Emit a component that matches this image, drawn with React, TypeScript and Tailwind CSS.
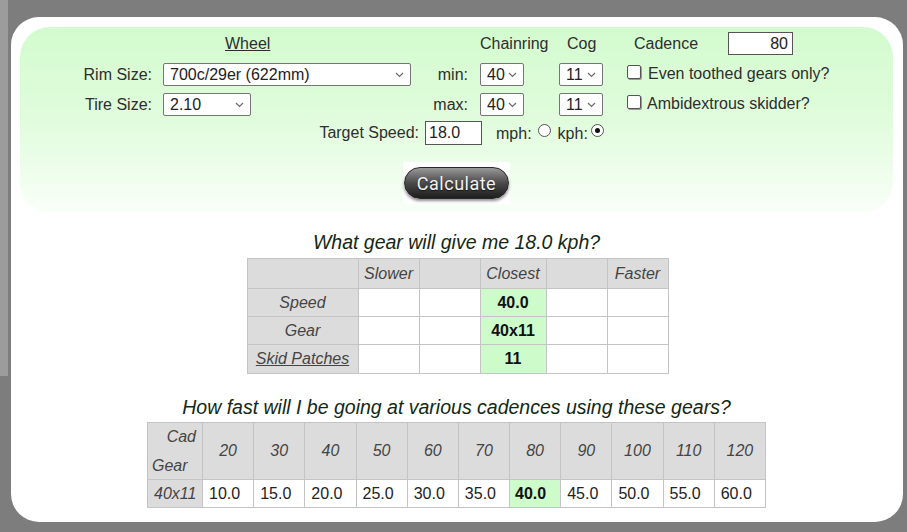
import React from "react";

const F = { fontFamily: '"Liberation Sans", Arial, sans-serif' };

function Chevron() {
  return (
    <svg width="9" height="6" viewBox="0 0 9 6" className="shrink-0">
      <path d="M1 1 L4.5 4.5 L8 1" fill="none" stroke="#6b6b6b" strokeWidth="1.2" />
    </svg>
  );
}

function FakeSelect({ value, w }: { value: string; w: string }) {
  return (
    <div
      className={`${w} h-[23px] bg-white border border-[#767676] rounded-[2px] flex items-center justify-between pl-[6px] pr-[6px] text-[16px] text-[#222] leading-none`}
    >
      <span>{value}</span>
      <Chevron />
    </div>
  );
}

function Checkbox() {
  return (
    <div className="w-[14px] h-[14px] bg-white border-[1.5px] border-[#555] rounded-[2px] shadow-[1px_1px_0_#9a9a9a] shrink-0" />
  );
}

function Radio({ checked }: { checked?: boolean }) {
  return (
    <div className="w-[13px] h-[13px] rounded-full bg-white border border-[#555] flex items-center justify-center shrink-0">
      {checked && <div className="w-[5px] h-[5px] rounded-full bg-[#111]" />}
    </div>
  );
}

export default function App() {
  const cads = ["20", "30", "40", "50", "60", "70", "80", "90", "100", "110", "120"];
  const vals = ["10.0", "15.0", "20.0", "25.0", "30.0", "35.0", "40.0", "45.0", "50.0", "55.0", "60.0"];
  const hd = "border border-[#c4c4c4] bg-[#dcdcdc] italic text-[#444] text-[16px] font-normal";
  const cell = "border border-[#c4c4c4] bg-white";
  const green = "border border-[#c4c4c4] bg-[#cdfbc9] font-bold text-[#111] text-[16px] text-center";
  return (
    <div className="relative w-[907px] h-[532px] bg-[#7d7d7d] overflow-hidden pt-[17px] pl-[11px]" style={F}>
      <div className="absolute left-0 top-0 w-[8px] h-[376px] bg-[#9c9c9c]" />
      <div className="relative w-[892px] h-[505px] bg-white rounded-[28px] pt-[10px] pl-[9px]">
        {/* green form panel */}
        <div className="w-[873px] h-[185px] rounded-[30px] bg-gradient-to-b from-[#d3fbcf] via-[#e0fcdc] to-[#f9fff8] text-[#2e2e2e] text-[16px] pt-[5px]">
          {/* row 1 */}
          <div className="flex items-center h-[23px]">
            <div className="w-[205px]" />
            <div className="w-[255px] underline">Wheel</div>
            <div className="w-[87px]">Chainring</div>
            <div className="w-[67px]">Cog</div>
            <div className="w-[94px]">Cadence</div>
            <div className="w-[65px] h-[23px] bg-white border border-[#555] flex items-center justify-end pr-[4px] text-[#222]">80</div>
          </div>
          {/* row 2 */}
          <div className="flex items-center h-[23px] mt-[8px]">
            <div className="w-[132px] text-right">Rim Size:</div>
            <div className="ml-[11px]"><FakeSelect value="700c/29er (622mm)" w="w-[248px]" /></div>
            <div className="w-[57px] text-right">min:</div>
            <div className="ml-[12px]"><FakeSelect value="40" w="w-[44px]" /></div>
            <div className="ml-[35px]"><FakeSelect value="11" w="w-[44px]" /></div>
            <div className="ml-[24px] -mt-[6px]"><Checkbox /></div>
            <div className="ml-[7px] -mt-[2px]">Even toothed gears only?</div>
          </div>
          {/* row 3 */}
          <div className="flex items-center h-[23px] mt-[7px]">
            <div className="w-[132px] text-right">Tire Size:</div>
            <div className="ml-[11px]"><FakeSelect value="2.10" w="w-[88px]" /></div>
            <div className="w-[160px]" />
            <div className="w-[57px] text-right">max:</div>
            <div className="ml-[12px]"><FakeSelect value="40" w="w-[44px]" /></div>
            <div className="ml-[35px]"><FakeSelect value="11" w="w-[44px]" /></div>
            <div className="ml-[24px] -mt-[6px]"><Checkbox /></div>
            <div className="ml-[6px] -mt-[2px]">Ambidextrous skidder?</div>
          </div>
          {/* row 4 */}
          <div className="flex items-center h-[24px] mt-[5px]">
            <div className="w-[399px] text-right">Target Speed:</div>
            <div className="ml-[6px] w-[57px] h-[24px] bg-white border border-[#555] flex items-center pl-[3px] text-[#222]">18.0</div>
            <div className="ml-[14px] mt-[2px]">mph:</div>
            <div className="ml-[6px] -mt-[6px]"><Radio /></div>
            <div className="ml-[7px] mt-[2px]">kph:</div>
            <div className="ml-[3px] -mt-[6px]"><Radio checked /></div>
          </div>
          {/* button */}
          <div className="ml-[383px] mt-[17px] w-[107px] h-[42px] bg-white flex items-start justify-center pt-[5px]">
            <div
              className="w-[105px] h-[32px] rounded-full bg-gradient-to-b from-[#9a9a9a] via-[#4a4a4a] to-[#1e1e1e] border border-[#2a2a2a] shadow-[0_2px_3px_rgba(0,0,0,0.45)] flex items-center justify-center text-[#f2f2f2] text-[18px] tracking-[0.5px]"
              style={{ fontFamily: '"Roboto", "Liberation Sans", sans-serif', fontWeight: 400, textShadow: "0 1px 1px rgba(0,0,0,0.6)" }}
            >
              Calculate
            </div>
          </div>
        </div>

        {/* heading 1 */}
        <div className="w-[873px] text-center italic text-[19.5px] leading-[22px] text-[#132813] mt-[19px]">
          What gear will give me 18.0 kph?
        </div>
        <div className="w-[873px] flex justify-center mt-[5px]">
          <table className="border-collapse table-fixed w-[421px] ml-[2px] text-[16px]">
            <colgroup>
              <col className="w-[111px]" />
              <col className="w-[61px]" />
              <col className="w-[61px]" />
              <col className="w-[66px]" />
              <col className="w-[61px]" />
              <col className="w-[61px]" />
            </colgroup>
            <tbody>
              <tr className="h-[30px]">
                <td className={hd}></td>
                <td className={`${hd} text-center`}>Slower</td>
                <td className={hd}></td>
                <td className={`${hd} text-center`}>Closest</td>
                <td className={hd}></td>
                <td className={`${hd} text-center`}>Faster</td>
              </tr>
              <tr className="h-[28px]">
                <td className={`${hd} text-center`}>Speed</td>
                <td className={cell}></td>
                <td className={cell}></td>
                <td className={green}>40.0</td>
                <td className={cell}></td>
                <td className={cell}></td>
              </tr>
              <tr className="h-[28px]">
                <td className={`${hd} text-center`}>Gear</td>
                <td className={cell}></td>
                <td className={cell}></td>
                <td className={green}>40x11</td>
                <td className={cell}></td>
                <td className={cell}></td>
              </tr>
              <tr className="h-[29px]">
                <td className={`${hd} text-center underline`}>Skid Patches</td>
                <td className={cell}></td>
                <td className={cell}></td>
                <td className={green}>11</td>
                <td className={cell}></td>
                <td className={cell}></td>
              </tr>
            </tbody>
          </table>
        </div>

        {/* heading 2 */}
        <div className="w-[873px] text-center italic text-[19.5px] leading-[22px] text-[#132813] mt-[22px]">
          How fast will I be going at various cadences using these gears?
        </div>
        <div className="w-[873px] flex justify-center mt-[4px]">
          <table className="border-collapse table-fixed w-[619px] text-[16px]">
            <colgroup>
              <col className="w-[55px]" />
              {cads.map((c) => (
                <col key={c} />
              ))}
            </colgroup>
            <tbody>
              <tr className="h-[57px]">
                <td className={`${hd} p-0`}>
                  <div className="flex flex-col h-[55px] justify-between py-[3px] leading-[20px]">
                    <div className="text-right pr-[6px]">Cad</div>
                    <div className="text-left pl-[4px]">Gear</div>
                  </div>
                </td>
                {cads.map((c) => (
                  <td key={c} className={`${hd} text-center`}>{c}</td>
                ))}
              </tr>
              <tr className="h-[28px]">
                <td className={`${hd} pl-[6px]`}>40x11</td>
                {vals.map((v, i) =>
                  i === 6 ? (
                    <td key={v} className="border border-[#c4c4c4] bg-[#cdfbc9] font-bold text-[#111] pl-[5px]">{v}</td>
                  ) : (
                    <td key={v} className={`${cell} pl-[6px] text-[#222]`}>{v}</td>
                  )
                )}
              </tr>
            </tbody>
          </table>
        </div>
      </div>
    </div>
  );
}
